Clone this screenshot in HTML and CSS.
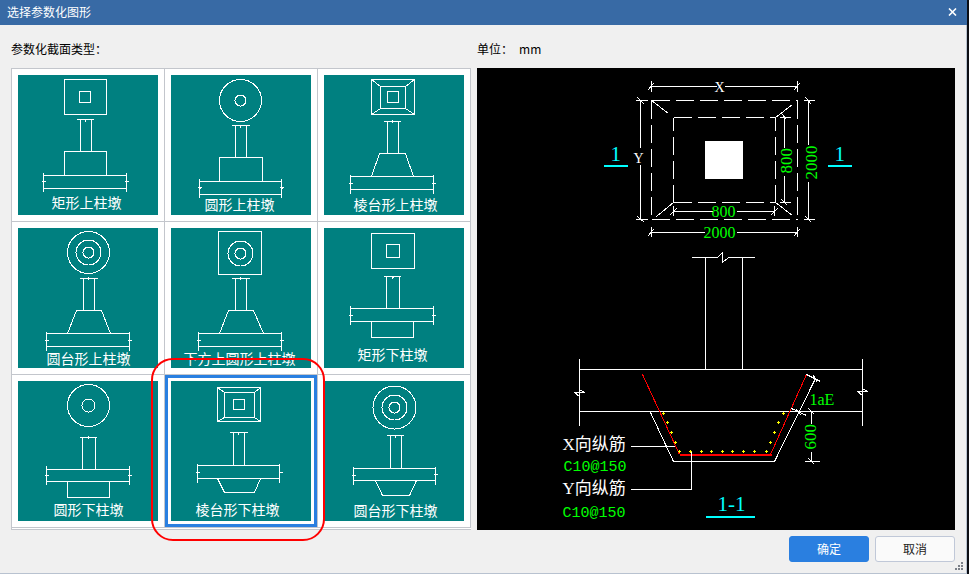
FILE: index.html
```html
<!DOCTYPE html>
<html lang="zh-CN">
<head>
<meta charset="utf-8">
<meta name="viewport" content="width=device-width, initial-scale=1">
<title>选择参数化图形</title>
<link rel="stylesheet" href="styles.css">
</head>
<body>
<main class="dialog">
  <header class="titlebar">
    <h1 class="title">选择参数化图形</h1>
    <button type="button" class="close" aria-label="关闭">
      <svg width="9" height="8" viewBox="0 0 9 8"><path d="M1 .5 8 7.5M8 .5 1 7.5"/></svg>
    </button>
  </header>

  <div class="content">
    <section class="column">
      <h2 class="label">参数化截面类型：</h2>
      <div class="gallery">
        <div class="cell"><button type="button" class="thumb">
          <svg class="shape" viewBox="-.5 -.5 140 140">
            <path d="M46 4H88V39H46ZM61 16H72V27H61ZM58 44H75M66 43V44M67 43V46M62 44V76M73 44V76M46 100V76H88V100M25 100H108M25 113H108M25 97V116M108 97V116M23 106H27M106 106H110"/>
            <text x="33" y="132">矩形上柱墩</text>
          </svg></button></div>
        <div class="cell"><button type="button" class="thumb">
          <svg class="shape" viewBox="-.5 -.5 140 140">
            <circle cx="69" cy="25" r="21"/><circle cx="69" cy="25" r="5.5"/>
            <path d="M60 50H78M69 49V52M64 50V82M75 50V82M48 106V82H91V106M28 106H110M28 119H110M28 103V122M110 103V122M26 112H30M27 113H29M108 112H112M109 113H111"/>
            <text x="33" y="134">圆形上柱墩</text>
          </svg></button></div>
        <div class="cell"><button type="button" class="thumb">
          <svg class="shape" viewBox="-.5 -.5 140 140">
            <path d="M47 4H90V39H47ZM56 11H81V33H56ZM63 16H74V27H63ZM47 4 56 11M90 4 81 11M47 39 56 33M90 39 81 33M59 46H76M68 44V47M63 46V78M74 46V78M47 101 55 78H81L89 101M26 101H109M26 114H109M26 99V118M109 99V118M24 108H28M107 108H111"/>
            <text x="29" y="134">棱台形上柱墩</text>
          </svg></button></div>
        <div class="cell"><button type="button" class="thumb">
          <svg class="shape" viewBox="-.5 -.5 140 140">
            <circle cx="70" cy="24" r="21"/><circle cx="70" cy="24" r="12.5"/><circle cx="70" cy="24" r="5.5"/>
            <path d="M61 50H79M70 48V51M65 50V82M76 50V82M49 105 58 82H83L92 105M28 105H111M28 118H111M28 103V122M111 103V122M26 112H30M109 112H113"/>
            <text x="28" y="135">圆台形上柱墩</text>
          </svg></button></div>
        <div class="cell"><button type="button" class="thumb">
          <svg class="shape" viewBox="-.5 -.5 140 140">
            <circle cx="69" cy="25" r="12.5"/><circle cx="69" cy="25" r="5.5"/>
            <path d="M47 3H90V46H47ZM60 50H78M69 48V51M64 50V82M75 50V82M48 105 57 82H82L92 105M27 105H110M27 118H110M27 103V122M110 103V122M25 112H29M108 112H112"/>
            <text x="12" y="135">下方上圆形上柱墩</text>
          </svg></button></div>
        <div class="cell"><button type="button" class="thumb">
          <svg class="shape" viewBox="-.5 -.5 140 140">
            <path d="M47 5H90V40H47ZM62 16H75V29H62ZM59 48H76M68 47V50M69 48V49M62 48V80M75 48V80M26 80H109M26 93H109M26 77V96M109 77V96M24 87H28M107 87H111M47 93V109H89V93"/>
            <text x="33" y="131">矩形下柱墩</text>
          </svg></button></div>
        <div class="cell"><button type="button" class="thumb">
          <svg class="shape" viewBox="-.5 -.5 140 140">
            <circle cx="70" cy="24" r="21"/><circle cx="70" cy="24" r="6.5"/>
            <path d="M61 56H78M70 54V57M64 56V88M77 56V88M28 88H111M28 100H111M28 84V103M111 84V103M26 94H30M109 94H113M49 100V116H91V100"/>
            <text x="35" y="133">圆形下柱墩</text>
          </svg></button></div>
        <div class="cell cell-selected"><button type="button" class="thumb" aria-pressed="true">
          <svg class="shape" viewBox="-.5 -.5 140 140">
            <path d="M46 6H89V40H46ZM53 11H83V36H53ZM62 18H73V28H62ZM46 6 53 11M89 6 83 11M46 40 53 36M89 40 83 36M58 51H76M67 50V53M62 51V84M73 51V84M26 84H108M26 97H108M26 82V101M108 82V101M24 91H28M107 91H111M46 97 53 111H83L89 97"/>
            <text x="24" y="133">棱台形下柱墩</text>
          </svg></button></div>
        <div class="cell"><button type="button" class="thumb">
          <svg class="shape" viewBox="-.5 -.5 140 140">
            <circle cx="70" cy="26" r="21.5"/><circle cx="70" cy="26" r="12.5"/><circle cx="70" cy="26" r="5.5"/>
            <path d="M62 54H79M71 53V56M66 54V87M77 54V87M29 87H111M29 99H111M29 85V103M111 85V103M27 94H31M109 93H113M51 99 58 114H85L92 99"/>
            <text x="29" y="134">圆台形下柱墩</text>
          </svg></button></div>
      </div>
    </section>

    <section class="column">
      <h2 class="label"><span>单位：</span><span>mm</span></h2>
      <div class="preview">
        <svg class="drawing" viewBox="-.5 -.5 478 462">
          <defs><path id="bar" d="M-.5-1.5h1v1h1v1h-1v1h-1v-1h-1v-1h1z"/></defs>
          <!-- plan: dashed outlines and slopes -->
          <g class="dashed">
            <path d="M174 32H320M174 151H320M174 32V151M320 32V151M196 49H298M196 134H298M196 134V49M298 134V49"/>
          </g>
          <path d="M174 32 191 45M298 49 315 36M196 134 179 148M298 134 315 147"/>
          <rect class="solid" x="227.5" y="72.5" width="38" height="38"/>
          <!-- plan: dimension lines -->
          <path d="M174 18H239M247 18H320M174 12V23M320 12V23M170 22 176 15M316 22 322 15"/>
          <path d="M163 32V79M163 96V151M158 32H170M158 151H170M160 29 167 36M160 148 167 154"/>
          <path d="M196 143H235M259 143H297M196 137V147M297 137V147M192 147 199 140M293 147 300 140"/>
          <path d="M174 164H227M259 164H320M174 158V168M320 158V168M170 168 176 161M316 168 322 161"/>
          <path d="M307 49V79M307 107V134M302 49H313M302 134H313M304 45 309 51M304 131 310 137"/>
          <path d="M331 32V76M331 113V151M326 32H337M326 151H337M328 29 334 36M328 148 334 154"/>
          <g class="note white"><text x="237" y="23">X</text><text x="156" y="94">Y</text></g>
          <g class="note green">
            <text x="234" y="148">800</text>
            <text x="226" y="169">2000</text>
            <text class="upright" transform="translate(314 105) rotate(-90)">800</text>
            <text class="upright" transform="translate(339 111) rotate(-90)">2000</text>
          </g>
          <g class="mark">
            <path d="M126 97.5H150M350 97.5H374M228 448.5H277"/>
            <text x="133" y="92">1</text><text x="357" y="92">1</text><text x="240" y="442">1-1</text>
          </g>
          <!-- section: column, slab and pier -->
          <path d="M214 189H240L245 184V194L251 189H277M228 189V301M265 189V301"/>
          <path d="M102 301H385M102 343H385M102 290V357M385 290V357"/>
          <path d="M97 324H107L102 321M97 324 102 328M380 323H390L385 320M380 323 385 327"/>
          <path d="M173 344 196 393H297L338 310"/>
          <g class="rebar"><path d="M165 306 202 386M293 386 329 306"/><path class="heavy" d="M202 386.5H294"/></g>
          <g class="bars">
            <use href="#bar" x="186" y="345"/><use href="#bar" x="190" y="354"/><use href="#bar" x="194" y="364"/><use href="#bar" x="198" y="374"/>
            <use href="#bar" x="202" y="383"/><use href="#bar" x="213" y="383"/><use href="#bar" x="224" y="383"/><use href="#bar" x="234" y="383"/>
            <use href="#bar" x="245" y="383"/><use href="#bar" x="255" y="383"/><use href="#bar" x="266" y="383"/><use href="#bar" x="277" y="383"/>
            <use href="#bar" x="289" y="383"/><use href="#bar" x="293" y="374"/><use href="#bar" x="297" y="364"/><use href="#bar" x="301" y="354"/>
            <use href="#bar" x="306" y="345"/>
          </g>
          <path d="M153 378H197M153 421H214V383"/>
          <path d="M329 306 343 313M336 307 340 314M314 340 329 347M319 341 324 347M334 343V355M334 383V393M327 393H342M331 340 337 346M331 390 337 396"/>
          <g class="note green">
            <text x="332" y="336">1aE</text>
            <text class="upright" transform="translate(338 381) rotate(-90)">600</text>
          </g>
          <g class="callout white"><text x="85" y="381">X向纵筋</text><text x="85" y="425">Y向纵筋</text></g>
          <g class="code green"><text x="86" y="402">C10@150</text><text x="85" y="448">C10@150</text></g>
        </svg>
      </div>
    </section>
  </div>

  <footer class="actions">
    <button type="button" class="button primary">确定</button>
    <button type="button" class="button">取消</button>
  </footer>
  <svg class="grip" width="8" height="8" viewBox="0 0 8 8"><path d="M6 0h2v2H6zM3 3h2v2H3zM6 3h2v2H6zM0 6h2v2H0zM3 6h2v2H3zM6 6h2v2H6z"/></svg>
</main>
</body>
</html>
```

FILE: styles.css
```css
* {
  box-sizing: border-box;
}

body {
  margin: 0;
  padding-right: 2px;
  background: #0c0e14;
  color: #000;
  font: 12px/16px "Noto Sans CJK SC", sans-serif;
}

button {
  margin: 0;
  font: inherit;
}

.dialog {
  position: relative;
  display: flex;
  flex-direction: column;
  min-height: 100vh;
  border-right: 1px solid #b8c2d0;
  border-bottom: 1px solid #b8c2d0;
  background: #f0f0f0;
}

.titlebar {
  display: flex;
  align-items: center;
  justify-content: space-between;
  height: 25px;
  margin-right: -1px;
  padding: 0 10px 2px 7px;
  background: #386aa5;
  color: #fff;
}

.title,
.label {
  margin: 0;
  font-size: 12px;
  font-weight: 400;
}

.close {
  display: flex;
  padding: 0;
  border: 0;
  background: none;
}

.close path {
  fill: none;
  stroke: #fff;
  stroke-width: 1.6;
}

.content {
  display: grid;
  grid-template-columns: 460fr 478fr;
  gap: 6px;
  padding: 16px 11px 6px;
}

.column {
  min-width: 0;
}

.label {
  display: flex;
  gap: 6px;
  margin-bottom: 11px;
}

.gallery {
  display: grid;
  grid-template-columns: repeat(3, 1fr);
  padding-bottom: 1px;
  border: 1px solid #c3c6cc;
  border-right: 0;
  background: #fff;
}

.cell {
  position: relative;
  border-right: 1px solid #c3c6cc;
  border-bottom: 1px solid #c3c6cc;
}

.thumb {
  display: block;
  width: 100%;
  padding: 3px;
  border: 3px solid transparent;
  background: #fff;
}

.cell-selected .thumb {
  border-color: #2a7fe0;
}

.cell-selected::after {
  content: "";
  position: absolute;
  z-index: 1;
  inset: -17px -8px -14px -14px;
  border: 2px solid #f00;
  border-radius: 22px;
  pointer-events: none;
}

.shape,
.drawing {
  display: block;
  width: 100%;
  fill: none;
  stroke: #fff;
  stroke-width: 1;
  shape-rendering: crispEdges;
}

.shape {
  background: #008080;
}

.drawing text,
.shape text {
  stroke: none;
}

.shape text {
  fill: #fff;
  font-size: 14px;
}

.preview {
  background: #000;
}

.dashed {
  stroke-dasharray: 18 6;
}

.solid {
  fill: #fff;
  stroke: none;
}

.white {
  fill: #fff;
}

.green {
  fill: #0f0;
}

.note {
  font: 16px "Liberation Serif", serif;
}

.note.white {
  font-size: 14px;
}

.note .upright {
  font-size: 17px;
}

.mark {
  fill: #0ff;
  stroke: #0ff;
  stroke-width: 2;
  font: 21px "Liberation Serif", serif;
}

.rebar {
  stroke: #f00;
}

.rebar .heavy {
  stroke-width: 2;
}

.bars {
  fill: #ff0;
  stroke: none;
}

.callout {
  font: 17px "Liberation Serif", "Noto Sans CJK SC", serif;
}

.code {
  font: 15px "Liberation Mono", monospace;
}

.actions {
  display: flex;
  justify-content: flex-end;
  gap: 6px;
  padding: 0 11px 11px;
}

.button {
  width: 80px;
  height: 26px;
  padding: 0;
  border: 1px solid #c0c8d8;
  border-radius: 3px;
  background: #fafafa;
  color: #222;
}

.primary {
  border-color: #2a7fe0;
  background: #2a7fe0;
  color: #fff;
}

.grip {
  position: absolute;
  right: 3px;
  bottom: 3px;
  fill: #7b8088;
}
```
